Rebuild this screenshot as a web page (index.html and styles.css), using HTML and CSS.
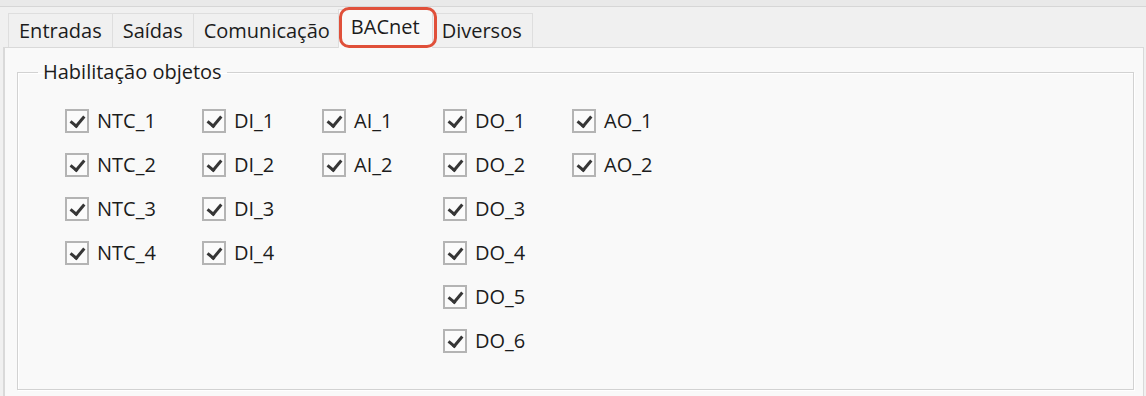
FILE: index.html
```html
<!DOCTYPE html>
<html lang="pt">
<head>
  <meta charset="UTF-8">
  <title>BACnet</title>
  <link rel="stylesheet" href="styles.css">
</head>
<body>

  <div class="top-strip"></div>

  <div class="tab-bar">
    <div class="tab">Entradas</div>
    <div class="tab">Saídas</div>
    <div class="tab">Comunicação</div>
    <div class="tab active">BACnet</div>
    <div class="tab">Diversos</div>
  </div>

  <div class="panel">
    <fieldset class="group">
      <legend>Habilitação objetos</legend>

      <div class="columns">
        <div class="column">
          <label class="check"><span class="box"></span>NTC_1</label>
          <label class="check"><span class="box"></span>NTC_2</label>
          <label class="check"><span class="box"></span>NTC_3</label>
          <label class="check"><span class="box"></span>NTC_4</label>
        </div>
        <div class="column">
          <label class="check"><span class="box"></span>DI_1</label>
          <label class="check"><span class="box"></span>DI_2</label>
          <label class="check"><span class="box"></span>DI_3</label>
          <label class="check"><span class="box"></span>DI_4</label>
        </div>
        <div class="column">
          <label class="check"><span class="box"></span>AI_1</label>
          <label class="check"><span class="box"></span>AI_2</label>
        </div>
        <div class="column">
          <label class="check"><span class="box"></span>DO_1</label>
          <label class="check"><span class="box"></span>DO_2</label>
          <label class="check"><span class="box"></span>DO_3</label>
          <label class="check"><span class="box"></span>DO_4</label>
          <label class="check"><span class="box"></span>DO_5</label>
          <label class="check"><span class="box"></span>DO_6</label>
        </div>
        <div class="column">
          <label class="check"><span class="box"></span>AO_1</label>
          <label class="check"><span class="box"></span>AO_2</label>
        </div>
      </div>
    </fieldset>
  </div>

</body>
</html>
```

FILE: styles.css
```css
* {
  box-sizing: border-box;
}

body {
  margin: 0;
  height: 100vh;
  overflow: hidden;
  display: flex;
  flex-direction: column;
  background: #f0f0f0;
  font-family: 'Open Sans', 'Noto Sans', sans-serif;
  font-size: 20px;
  color: #1c1c1c;
}

.top-strip {
  height: 7px;
  flex-shrink: 0;
  background: #e9e9e9;
  border-bottom: 1px solid #d6d6d6;
}

.tab-bar {
  display: flex;
  align-items: flex-end;
  padding: 2px 0 0 8px;
  position: relative;
  z-index: 1;
  flex-shrink: 0;
}

.tab {
  height: 34px;
  padding: 0 10px 1px;
  display: flex;
  align-items: center;
  background: #f0f0f0;
  border: 1px solid #dedede;
  border-bottom: none;
  margin-right: -1px;
}

.tab.active {
  height: 39px;
  margin: 0 -2px -1px -2px;
  padding: 0 12px 5px;
  background: #f9f9f9;
  position: relative;
}

/* destaque vermelho em volta da aba */
.tab.active::after {
  content: '';
  position: absolute;
  left: 0;
  right: -5px;
  top: -3px;
  bottom: 0;
  border: 3px solid #e0503a;
  border-radius: 10px;
}

.panel {
  flex: 1;
  margin: 0 2px 0 3px;
  background: #f9f9f9;
  border: 1px solid #d9d9d9;
  border-left-width: 2px;
  border-bottom: none;
  padding: 12px 9px 0 12px;
}

.group {
  margin: 0;
  padding: 0 0 36px 0;
  border: 1px solid #d2d2d2;
  box-shadow: inset 1px 1px 0 #ffffff, 1px 1px 0 #ffffff;
}

.group legend {
  margin-left: 20px;
  padding: 0 5px;
  line-height: 24px;
}

.columns {
  display: grid;
  grid-template-columns: 137px 120px 121px 129px auto;
  align-items: start;
  padding: 25px 0 0 47px;
}

.column {
  display: flex;
  flex-direction: column;
  gap: 20px;
}

.check {
  display: flex;
  align-items: center;
  gap: 8px;
  height: 24px;
  line-height: 24px;
  white-space: nowrap;
}

.box {
  width: 24px;
  height: 24px;
  border: 2px solid #b4b4b4;
  background: #fbfbfb;
  position: relative;
  flex-shrink: 0;
}

.box::after {
  content: '';
  position: absolute;
  left: 6px;
  top: 2px;
  width: 6px;
  height: 11px;
  border-right: 3px solid #363636;
  border-bottom: 3px solid #363636;
  transform: rotate(40deg);
}
```
